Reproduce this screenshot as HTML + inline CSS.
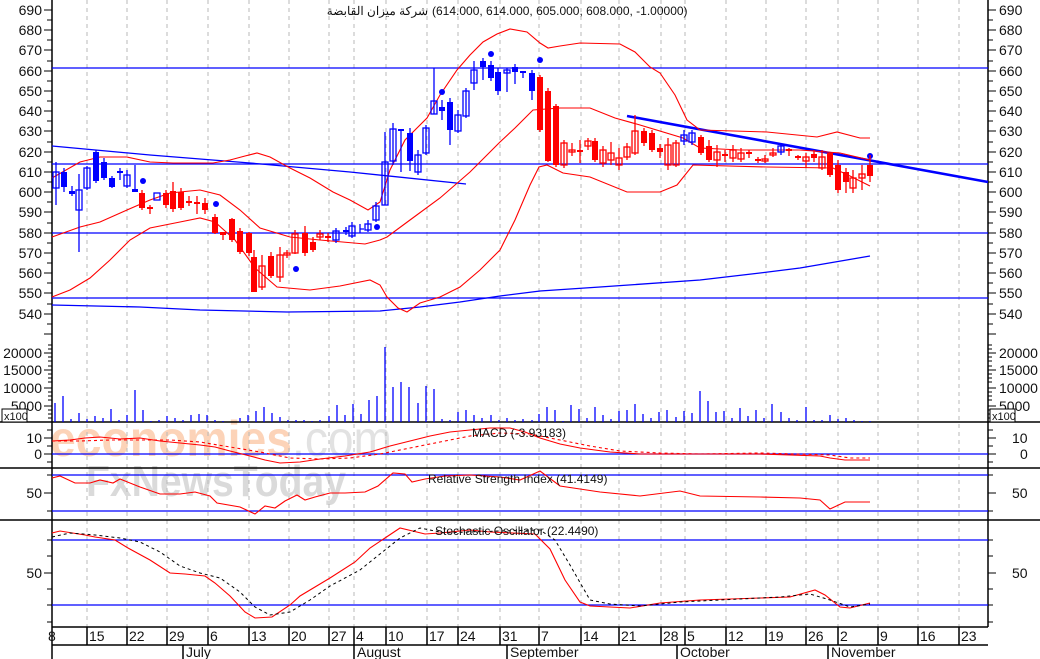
<!DOCTYPE html>
<html><head><meta charset="utf-8"><style>
html,body{margin:0;padding:0;background:#fff}
svg{display:block}
text{font-family:"Liberation Sans","Noto Sans CJK SC",sans-serif}
</style></head><body>
<svg width="1040" height="659" viewBox="0 0 1040 659" xmlns="http://www.w3.org/2000/svg">
<rect width="1040" height="659" fill="#fff"/>
<!-- watermark -->
<text x="50" y="456" font-size="50" font-weight="bold" fill="#fcd3b8" textLength="242" lengthAdjust="spacingAndGlyphs">economies</text>
<text x="292" y="456" font-size="50" fill="#e2e2e2" textLength="100" lengthAdjust="spacingAndGlyphs">.com</text>
<text x="86" y="496" font-size="44" font-weight="bold" fill="#dadada" textLength="260" lengthAdjust="spacingAndGlyphs">FxNewsToday</text>
<!-- grid -->
<g stroke="#b8b8b8" stroke-dasharray="4,4" stroke-width="1">
<path d="M87 0V627M127 0V627M167 0V627M208 0V627M249 0V627M289 0V627M329 0V627M354 0V627M386 0V627M427 0V627M458 0V627M500 0V627M539 0V627M581 0V627M619 0V627M661 0V627M685 0V627M726 0V627M766 0V627M806 0V627M838 0V627M878 0V627M918 0V627M959 0V627"/>
</g>
<!-- panel separators -->
<g stroke="#000" stroke-width="1.5">
<path d="M0 422H1040M0 468H1040M0 520H1040M52 627H988M52 645H988"/>
<path d="M52 0V659M988 0V627"/>
<path d="M183 645V659M354 627V659M507 645V659M677 645V659M828 645V659"/>
<path d="M87 627V645M127 627V645M167 627V645M208 627V645M249 627V645M289 627V645M329 627V645M386 627V645M427 627V645M458 627V645M500 627V645M539 627V645M581 627V645M619 627V645M661 627V645M685 627V645M726 627V645M766 627V645M806 627V645M838 627V645M878 627V645M918 627V645M959 627V645"/>
</g>
<!-- axis ticks -->
<g stroke="#000" stroke-width="1">
<path d="M44 10H52M44 30H52M44 50H52M44 71H52M44 91H52M44 111H52M44 131H52M44 152H52M44 172H52M44 192H52M44 212H52M44 233H52M44 253H52M44 273H52M44 293H52M44 314H52M44 334H52"/>
<path d="M47 20H52M47 40H52M47 61H52M47 81H52M47 101H52M47 121H52M47 142H52M47 162H52M47 182H52M47 202H52M47 223H52M47 243H52M47 263H52M47 283H52M47 304H52M47 324H52"/>
<path d="M988 10H996M988 30H996M988 50H996M988 71H996M988 91H996M988 111H996M988 131H996M988 152H996M988 172H996M988 192H996M988 212H996M988 233H996M988 253H996M988 273H996M988 293H996M988 314H996M988 334H996"/>
<path d="M988 20H993M988 40H993M988 61H993M988 81H993M988 101H993M988 121H993M988 142H993M988 162H993M988 182H993M988 202H993M988 223H993M988 243H993M988 263H993M988 283H993M988 304H993M988 324H993"/>
<path d="M44 353H52M44 370H52M44 388H52M44 406H52M48 345H52M48 349H52M48 357H52M48 361H52M48 366H52M48 374H52M48 378H52M48 382H52M48 392H52M48 396H52M48 400H52M48 410H52M48 414H52M48 418H52"/>
<path d="M988 353H996M988 370H996M988 388H996M988 406H996M988 345H992M988 349H992M988 357H992M988 361H992M988 366H992M988 374H992M988 378H992M988 382H992M988 392H992M988 396H992M988 400H992M988 410H992M988 414H992M988 418H992"/>
<path d="M44 438H52M44 454H52M47 430H52M47 446H52M47 462H52M988 438H996M988 454H996M988 430H993M988 446H993M988 462H993"/>
<path d="M44 493H52M47 475H52M47 511H52M988 493H996M988 475H993M988 511H993"/>
<path d="M44 573H52M47 540H52M47 556H52M47 589H52M47 605H52M47 622H52M988 573H996M988 540H993M988 556H993M988 589H993M988 605H993M988 622H993"/>
</g>
<!-- axis labels -->
<g font-size="14" fill="#111" text-anchor="end">
<text x="42" y="15">690</text><text x="42" y="35">680</text><text x="42" y="55">670</text><text x="42" y="76">660</text><text x="42" y="96">650</text><text x="42" y="116">640</text><text x="42" y="136">630</text><text x="42" y="157">620</text><text x="42" y="177">610</text><text x="42" y="197">600</text><text x="42" y="217">590</text><text x="42" y="238">580</text><text x="42" y="258">570</text><text x="42" y="278">560</text><text x="42" y="298">550</text><text x="42" y="319">540</text>
<text x="42" y="358">20000</text><text x="42" y="375">15000</text><text x="42" y="393">10000</text><text x="42" y="411">5000</text>
<text x="42" y="443">10</text><text x="42" y="459">0</text><text x="42" y="498">50</text><text x="42" y="578">50</text>
</g>
<g font-size="14" fill="#111">
<text x="999" y="15">690</text><text x="999" y="35">680</text><text x="999" y="55">670</text><text x="999" y="76">660</text><text x="999" y="96">650</text><text x="999" y="116">640</text><text x="999" y="136">630</text><text x="999" y="157">620</text><text x="999" y="177">610</text><text x="999" y="197">600</text><text x="999" y="217">590</text><text x="999" y="238">580</text><text x="999" y="258">570</text><text x="999" y="278">560</text><text x="999" y="298">550</text><text x="999" y="319">540</text>
<text x="999" y="358">20000</text><text x="999" y="375">15000</text><text x="999" y="393">10000</text><text x="999" y="411">5000</text>
<text x="1012" y="443">10</text><text x="1020" y="459">0</text><text x="1012" y="498">50</text><text x="1012" y="578">50</text>
</g>
<rect x="2" y="409" width="25" height="13" fill="#fff" stroke="#000"/>
<text x="4" y="420" font-size="11" fill="#111">x100</text>
<rect x="990" y="409" width="25" height="13" fill="#fff" stroke="#000"/>
<text x="992" y="420" font-size="11" fill="#111">x100</text>
<!-- date labels -->
<g font-size="14" fill="#111">
<text x="48" y="641">8</text><text x="89" y="641">15</text><text x="129" y="641">22</text><text x="169" y="641">29</text><text x="210" y="641">6</text><text x="251" y="641">13</text><text x="291" y="641">20</text><text x="331" y="641">27</text><text x="356" y="641">4</text><text x="388" y="641">10</text><text x="429" y="641">17</text><text x="460" y="641">24</text><text x="502" y="641">31</text><text x="541" y="641">7</text><text x="583" y="641">14</text><text x="621" y="641">21</text><text x="663" y="641">28</text><text x="687" y="641">5</text><text x="728" y="641">12</text><text x="768" y="641">19</text><text x="808" y="641">26</text><text x="840" y="641">2</text><text x="880" y="641">9</text><text x="920" y="641">16</text><text x="961" y="641">23</text>
<text x="186" y="657">July</text><text x="357" y="657">August</text><text x="510" y="657">September</text><text x="680" y="657">October</text><text x="831" y="657">November</text>
</g>
<!-- title -->
<text x="428" y="15" font-size="12" fill="#111" text-anchor="end">شركة ميزان القابضة</text>
<text x="432" y="15" font-size="12" fill="#111">(614.000, 614.000, 605.000, 608.000, -1.00000)</text>
<!-- horizontal blue lines -->
<g stroke="#0000ff" stroke-width="1.3" fill="none">
<path d="M52 68H988M52 164H988M52 233H988M52 298H988M52 454H988M52 475H988M52 511H988M52 540H988M52 605H988"/>
<polyline points="52,146 150,155 250,163 350,172 466,184"/>
<polyline points="52,305 140,307 200,310 287,312 380,311 420,307 460,302 500,296 540,291 600,287 700,280 760,273 800,268 870,256"/>
</g>
<line x1="627" y1="116" x2="988" y2="182" stroke="#0000ff" stroke-width="2.6"/>
<!-- bollinger / MA -->
<g stroke="#ff0000" stroke-width="1.1" fill="none">
<polyline points="52,178 80,162 100,157 127,157 150,162 173,163 213,163 230,160 245,156 257,153 270,157 290,168 310,178 333,192 350,200 368,210 380,202 390,170 405,140 427,118 440,95 457,70 470,55 483,42 497,34 510,29 527,32 540,43 548,48 560,46 580,43 620,44 635,52 650,67 660,73 675,95 687,120 700,130 767,132 817,137 837,132 860,138 870,138"/>
<polyline points="52,237 80,227 100,222 127,210 150,200 170,193 200,190 220,195 240,210 260,228 290,237 320,240 365,244 380,240 387,237 410,220 440,198 470,172 500,142 515,128 533,110 560,108 590,108 615,118 640,125 683,138 700,148 740,150 800,150 840,153 870,160"/>
<polyline points="52,297 70,290 90,278 110,260 130,240 150,228 180,222 200,218 215,222 235,240 255,268 277,287 310,290 340,286 370,280 380,285 387,297 398,308 407,312 420,303 440,297 460,287 480,270 500,250 515,220 530,185 539,167 547,165 563,173 590,177 627,192 660,192 677,185 693,165 767,167 833,168 850,176 870,186"/>
</g>
<!-- candles blue -->
<g stroke="#0000ff" stroke-width="1.3" fill="none">
<path d="M56 162V205M64 168V192M72 186V196M79 174V252M87 166V190M96 150V183M104 158V180M112 176V188M120 168V180M127 170V188M135 165V191M336 228V243M346 227V235M352 222V238M360 224V233M368 220V232M376 202V222M385 132V205M393 123V165M401 130V172M410 128V171M418 150V175M426 125V155M434 68V114M442 100V120M450 98V145M458 110V133M466 88V118M474 61V90M483 58V80M491 61V81M498 68V95M507 68V92M515 64V84M523 72V78M532 70V100M684 130V145M692 130V145M781 143V155M360 229H364"/>
<rect x="53" y="172" width="6" height="16"/><rect x="76" y="190" width="6" height="20"/><rect x="84" y="168" width="6" height="20"/><rect x="124" y="175" width="6" height="11"/><rect x="154" y="193" width="6" height="7"/><rect x="333" y="231" width="6" height="9"/><rect x="349" y="226" width="6" height="10"/><rect x="365" y="224" width="6" height="6"/><rect x="373" y="206" width="6" height="14"/><rect x="382" y="162" width="6" height="43"/><rect x="390" y="129" width="6" height="32"/><rect x="415" y="155" width="6" height="17"/><rect x="423" y="128" width="6" height="25"/><rect x="431" y="101" width="6" height="13"/><rect x="455" y="115" width="6" height="16"/><rect x="463" y="91" width="6" height="25"/><rect x="471" y="70" width="6" height="13"/><rect x="504" y="70" width="6" height="3"/><rect x="681" y="135" width="6" height="6"/><rect x="689" y="133" width="6" height="9"/><rect x="778" y="146" width="6" height="6"/>
</g>
<g fill="#0000ff">
<rect x="61" y="172" width="6" height="15"/><rect x="69" y="191" width="6" height="3"/><rect x="93" y="152" width="6" height="29"/><rect x="101" y="162" width="6" height="16"/><rect x="109" y="178" width="6" height="9"/><rect x="117" y="171" width="6" height="2"/><rect x="132" y="189" width="6" height="3"/><rect x="343" y="230" width="6" height="2"/><rect x="398" y="129" width="6" height="2"/><rect x="407" y="133" width="6" height="28"/><rect x="439" y="107" width="6" height="4"/><rect x="447" y="102" width="6" height="28"/><rect x="480" y="61" width="6" height="6"/><rect x="488" y="65" width="6" height="13"/><rect x="495" y="72" width="6" height="19"/><rect x="512" y="67" width="6" height="5"/><rect x="520" y="71" width="6" height="2"/><rect x="529" y="73" width="6" height="18"/>
<circle cx="143" cy="181" r="3"/><circle cx="216" cy="204" r="3"/><circle cx="296" cy="269" r="3"/><circle cx="377" cy="227" r="3"/><circle cx="442" cy="92" r="3"/><circle cx="491" cy="54" r="3"/><circle cx="540" cy="60" r="3"/><circle cx="830" cy="159" r="3"/><circle cx="870" cy="156" r="3"/>
</g>
<!-- candles red -->
<g stroke="#ff0000" stroke-width="1.3" fill="none">
<path d="M142 190V210M150 205V214M166 190V208M173 182V212M181 188V210M189 196V206M197 196V214M205 198V214M215 214V234M223 232V240M232 218V242M240 228V254M249 232V256M254 250V292M262 255V290M271 252V278M280 247V282M287 250V258M295 230V254M305 226V256M313 237V252M320 230V240M328 233V242M540 75V132M548 88V162M556 104V167M564 140V168M572 143V156M580 140V163M588 138V150M595 138V162M603 146V167M611 142V165M619 148V170M627 143V160M635 115V155M644 128V146M652 130V152M660 144V158M668 138V170M676 140V167M701 135V155M709 140V162M717 145V167M725 150V162M733 145V162M741 148V162M749 150V158M758 157V163M765 155V163M773 148V157M789 148V156M798 155V160M806 153V168M814 150V162M822 150V170M830 152V177M838 160V193M846 168V193M853 170V193M862 165V190M870 155V182"/>
<rect x="259" y="266" width="6" height="21"/><rect x="277" y="255" width="6" height="22"/><rect x="284" y="253" width="6" height="2"/><rect x="292" y="234" width="6" height="19"/><rect x="317" y="234" width="6" height="3"/><rect x="561" y="143" width="6" height="22"/><rect x="569" y="150" width="6" height="2"/><rect x="585" y="141" width="6" height="5"/><rect x="600" y="150" width="6" height="13"/><rect x="608" y="153" width="6" height="7"/><rect x="616" y="158" width="6" height="7"/><rect x="624" y="147" width="6" height="10"/><rect x="632" y="131" width="6" height="22"/><rect x="665" y="145" width="6" height="20"/><rect x="673" y="143" width="6" height="22"/><rect x="714" y="152" width="6" height="8"/><rect x="730" y="150" width="6" height="8"/><rect x="738" y="153" width="6" height="6"/><rect x="762" y="159" width="6" height="2"/><rect x="770" y="153" width="6" height="2"/><rect x="803" y="157" width="6" height="4"/><rect x="819" y="157" width="6" height="11"/><rect x="850" y="178" width="6" height="10"/><rect x="859" y="174" width="6" height="4"/>
</g>
<g fill="#ff0000">
<rect x="139" y="193" width="6" height="15"/><rect x="147" y="207" width="6" height="2"/><rect x="163" y="193" width="6" height="12"/><rect x="170" y="191" width="6" height="18"/><rect x="178" y="192" width="6" height="16"/><rect x="186" y="201" width="6" height="2"/><rect x="194" y="202" width="6" height="2"/><rect x="202" y="203" width="6" height="7"/><rect x="212" y="217" width="6" height="16"/><rect x="220" y="232" width="6" height="3"/><rect x="229" y="219" width="6" height="21"/><rect x="237" y="231" width="6" height="21"/><rect x="246" y="233" width="6" height="20"/><rect x="251" y="257" width="6" height="35"/><rect x="268" y="256" width="6" height="20"/><rect x="302" y="233" width="6" height="20"/><rect x="310" y="242" width="6" height="8"/><rect x="325" y="236" width="6" height="2"/><rect x="537" y="77" width="6" height="53"/><rect x="545" y="91" width="6" height="70"/><rect x="553" y="106" width="6" height="59"/><rect x="577" y="150" width="6" height="2"/><rect x="592" y="141" width="6" height="19"/><rect x="641" y="131" width="6" height="12"/><rect x="649" y="133" width="6" height="17"/><rect x="657" y="148" width="6" height="4"/><rect x="698" y="137" width="6" height="16"/><rect x="706" y="146" width="6" height="14"/><rect x="722" y="154" width="6" height="2"/><rect x="746" y="152" width="6" height="2"/><rect x="755" y="159" width="6" height="2"/><rect x="786" y="149" width="6" height="2"/><rect x="795" y="156" width="6" height="2"/><rect x="811" y="154" width="6" height="4"/><rect x="827" y="153" width="6" height="22"/><rect x="835" y="165" width="6" height="25"/><rect x="843" y="172" width="6" height="10"/><rect x="867" y="165" width="6" height="11"/>
</g>
<!-- volume -->
<g stroke="#0000ff" stroke-width="1.3">
<path d="M55 422V403M63 422V396M71 422V419M79 422V413M87 422V419M95 422V416M103 422V418M111 422V409M119 422V420M127 422V415M135 422V390M143 422V410M151 422V421M159 422V420M167 422V416M175 422V418M183 422V420M191 422V415M199 422V414M207 422V415M215 422V420M223 422V421M240 422V418M248 422V415M256 422V411M264 422V407M272 422V413M280 422V417M288 422V420M296 422V420M304 422V420M312 422V421M320 422V420M329 422V416M337 422V405M345 422V415M353 422V404M361 422V414M369 422V400M377 422V396M385 422V347M393 422V387M401 422V382M409 422V387M418 422V403M426 422V386M434 422V389M442 422V419M450 422V420M458 422V412M466 422V410M474 422V415M482 422V418M491 422V415M499 422V420M507 422V418M515 422V420M523 422V419M532 422V420M539 422V414M547 422V407M555 422V410M563 422V421M571 422V405M579 422V409M587 422V418M595 422V407M603 422V415M611 422V419M619 422V411M627 422V410M635 422V404M643 422V414M651 422V418M659 422V412M667 422V410M676 422V417M684 422V411M692 422V413M700 422V391M708 422V401M716 422V412M724 422V411M732 422V418M740 422V408M748 422V416M756 422V410M764 422V418M772 422V404M781 422V412M789 422V418M797 422V420M806 422V407M814 422V420M822 422V420M830 422V415M838 422V419M846 422V418M854 422V420M862 422V421M870 422V421"/>
</g>
<!-- indicators -->
<g stroke="#ff0000" stroke-width="1.1" fill="none">
<polyline points="52,441 70,440 85,438 100,437 120,439 140,438 160,441 180,443 200,445 215,447 230,451 250,456 265,460 280,463 300,462 320,459 345,456 370,452 390,446 410,441 430,436 450,432 470,430 490,428 510,428 525,432 540,438 560,444 580,448 610,452 640,454 700,454 760,454 820,456 830,458 845,460 870,460"/>
<polyline stroke-dasharray="3,3" points="52,441 80,441 110,440 140,440 170,440 200,442 230,447 260,452 290,458 320,459 350,458 380,454 410,448 440,442 470,436 500,433 530,434 560,440 590,446 620,451 660,453 700,454 760,453 830,455 850,458 870,458"/>
<polyline points="52,478 60,476 75,483 90,483 100,480 113,483 120,479 140,487 160,494 180,494 195,492 210,496 217,503 240,507 255,514 265,506 275,508 285,501 297,495 305,500 315,497 330,493 345,493 365,492 378,486 393,473 405,474 412,482 425,479 445,476 470,475 500,477 520,480 540,471 560,486 600,492 640,496 680,491 700,496 760,497 800,498 820,500 830,509 845,502 870,502"/>
<polyline points="52,533 60,531 85,535 95,537 115,540 128,548 150,560 170,573 185,574 205,576 215,583 230,596 245,612 255,618 272,617 290,605 300,596 330,578 355,562 370,548 385,538 400,528 425,534 440,533 470,530 490,532 535,534 550,549 565,580 580,602 590,606 630,608 660,603 700,600 760,598 790,597 815,590 825,595 840,607 850,608 870,603"/>
</g>
<g stroke="#000" stroke-width="1" fill="none" stroke-dasharray="3,3">
<polyline points="52,537 70,533 95,535 120,538 140,542 160,552 180,566 200,573 220,578 240,592 255,607 270,615 290,612 310,600 330,586 360,570 385,550 400,538 420,528 445,533 470,532 500,531 540,530 555,540 570,565 590,600 610,604 640,606 680,602 720,600 780,597 810,594 830,600 850,607 870,604"/>
</g>
<!-- indicator labels -->
<g font-size="12" fill="#111">
<text x="472" y="437">MACD (-3.93183)</text>
<text x="428" y="483">Relative Strength Index (41.4149)</text>
<text x="435" y="535">Stochastic Oscillator (22.4490)</text>
</g>
</svg>
</body></html>
